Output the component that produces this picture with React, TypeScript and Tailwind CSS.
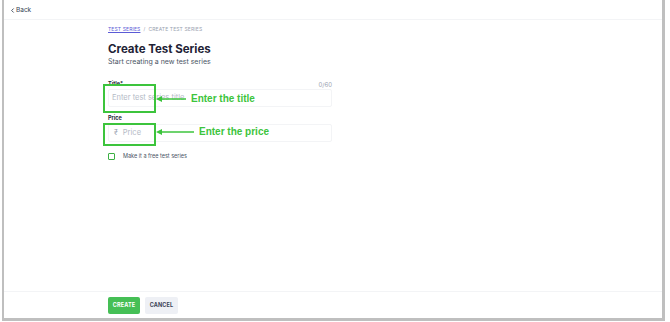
import { ChevronLeft } from "lucide-react";

function Annotation({ top, lineLeft, lineWidth, label }: { top: number; lineLeft: number; lineWidth: number; label: string }) {
  return (
    <div className="absolute flex items-center" style={{ top, left: lineLeft }}>
      <svg width={lineWidth} height="8" viewBox={`0 0 ${lineWidth} 8`}>
        <line x1="3" y1="4" x2={lineWidth} y2="4" stroke="#3cc43c" strokeWidth="1.5" />
        <path d="M0 4 L6 1 L6 7 Z" fill="#3cc43c" />
      </svg>
      <span className="ml-[5px] text-[10px] font-bold leading-none text-[#3cc43c] font-['Liberation_Sans',sans-serif]">
        {label}
      </span>
    </div>
  );
}

export default function App() {
  return (
    <div className="relative w-[670px] h-[322px] bg-white overflow-hidden font-['Inter',sans-serif]">
      <div className="ml-[2px] w-[663px] h-[321px] border-l-2 border-r-[3px] border-b-[3px] border-[#bfbfbf] flex flex-col">
        <div className="h-[20px] border-b border-gray-100 flex items-center pt-[2px] pl-[5px] text-[6.5px] text-gray-700">
          <ChevronLeft size={7} strokeWidth={3} />
          <span>Back</span>
        </div>

        <div className="flex-1 pl-[104px]">
          <div className="w-[224px]">
            <div className="mt-[6px] text-[5px] leading-[6px] uppercase tracking-wide">
              <span className="text-[#5b5bd6] underline">Test Series</span>
              <span className="text-gray-400 mx-[3px]">/</span>
              <span className="text-gray-400">Create Test Series</span>
            </div>

            <h1 className="mt-[10px] text-[11.5px] leading-[14px] font-bold text-[#1e2235]">Create Test Series</h1>
            <p className="mt-[1px] text-[7px] leading-[9px] text-gray-600">Start creating a new test series</p>

            <div className="mt-[15px] flex justify-between items-end">
              <label className="text-[5.5px] leading-[7px] font-bold text-gray-800">Title*</label>
              <span className="text-[6px] leading-[7px] text-gray-400">0/60</span>
            </div>
            <div className="mt-[1px] h-[18px] border border-gray-100 rounded-[2px] flex items-center px-[3px] text-[7.5px] text-[#b4bac6]">
              Enter test series title
            </div>

            <label className="block mt-[8px] text-[5.5px] leading-[7px] font-bold text-gray-800">Price</label>
            <div className="mt-[2px] h-[18px] border border-gray-100 rounded-[2px] flex items-center px-[5px] gap-[5px] text-[7.5px] text-[#b4bac6]">
              <span className="text-[7px] text-gray-400">₹</span>
              <span>Price</span>
            </div>

            <div className="mt-[10px] flex items-center gap-[8px]">
              <div className="w-[7px] h-[7px] border border-[#3cb043] rounded-[1px]" />
              <span className="text-[5.5px] text-gray-600">Make it a free test series</span>
            </div>
          </div>
        </div>

        <div className="h-[27px] border-t border-gray-100 pl-[104px] flex items-center gap-[5px]">
          <button className="h-[17px] w-[32px] rounded-[2px] bg-[#45bf55] text-white text-[5.5px] font-bold tracking-wide">
            CREATE
          </button>
          <button className="h-[17px] w-[33px] rounded-[2px] bg-[#eef0f5] text-[#3a4256] text-[5.5px] font-bold tracking-wide">
            CANCEL
          </button>
        </div>
      </div>

      <div className="absolute left-[103px] top-[84px] w-[53px] h-[29px] border-2 border-[#3cc43c]" />
      <div className="absolute left-[103px] top-[123px] w-[53px] h-[23px] border-2 border-[#3cc43c]" />
      <Annotation top={94} lineLeft={156} lineWidth={30} label="Enter the title" />
      <Annotation top={127} lineLeft={156} lineWidth={38} label="Enter the price" />
    </div>
  );
}
